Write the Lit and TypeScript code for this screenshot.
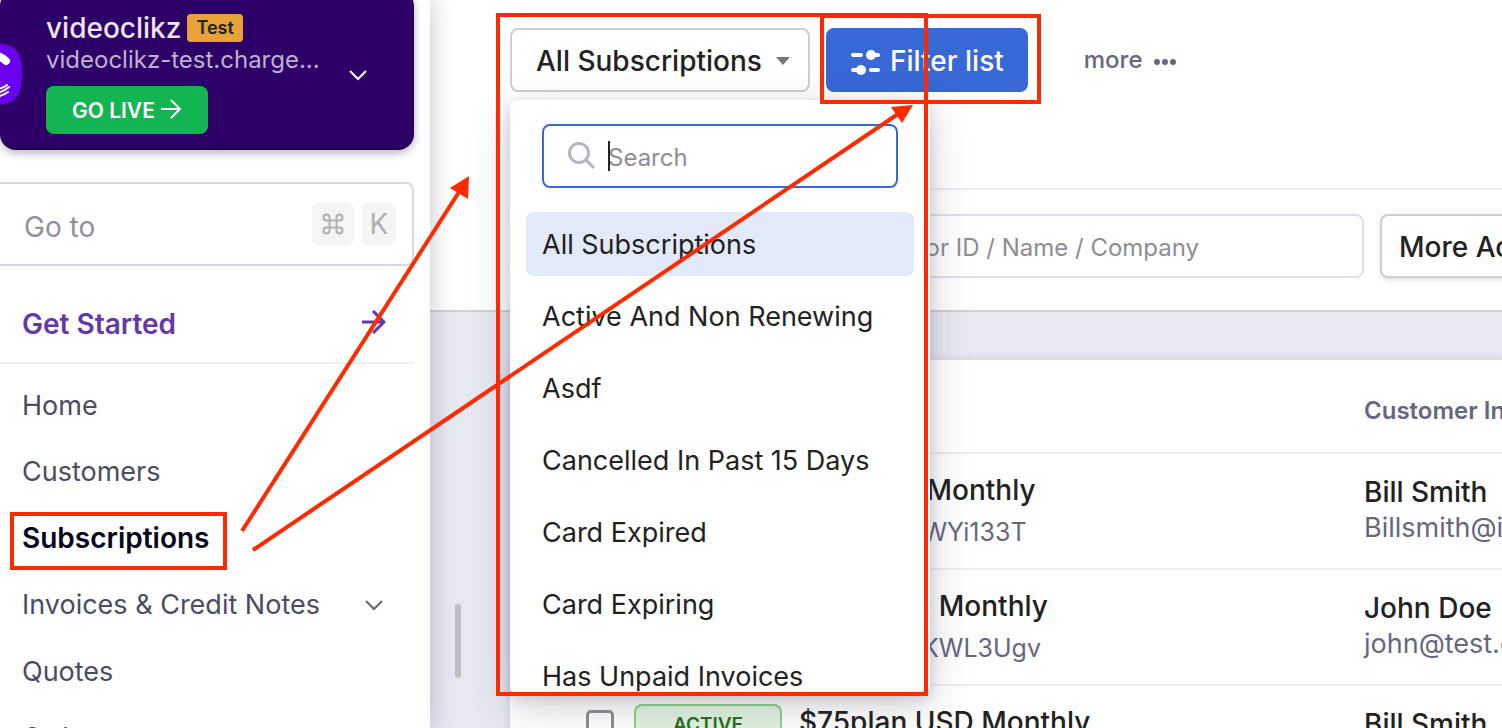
import { LitElement, html, css, svg } from "lit";
import { customElement, state } from "lit/decorators.js";
import { classMap } from "lit/directives/class-map.js";

const views = [
  "All Subscriptions",
  "Active And Non Renewing",
  "Asdf",
  "Cancelled In Past 15 Days",
  "Card Expired",
  "Card Expiring",
  "Has Unpaid Invoices",
];

const rows = [
  { plan: "$50 USD Monthly", id: "AzZhkCTkWYi133T", name: "Bill Smith", email: "Billsmith@imail.com" },
  { plan: "$100 USD Monthly", id: "16BhmTTkKWL3Ugv", name: "John Doe", email: "john@test.com" },
  { plan: "$75plan USD Monthly", id: "169ljTTkJWw2Ugr", name: "Bill Smith", email: "Billsmith@imail.com" },
];

const nav = [
  { label: "Home" },
  { label: "Customers" },
  { label: "Subscriptions", active: true },
  { label: "Invoices & Credit Notes", group: true },
  { label: "Quotes" },
  { label: "Orders" },
];

const chevron = html`<svg class="chevron" viewBox="0 0 20 12" width="20" height="12" aria-hidden="true">
  <path d="M2 2 L10 10 L18 2" fill="none" stroke="currentColor" stroke-width="2" />
</svg>`;

@customElement("side-nav")
class SideNav extends LitElement {
  static styles = css`
    :host {
      display: block;
      box-sizing: border-box;
      width: 430px;
      flex: none;
      padding-right: 16px;
      background: #fff;
      color: #4b4b63;
      font-size: 28px;
      line-height: 36px;
      box-shadow: 0 0 24px rgba(40, 40, 90, 0.28);
      z-index: 1;
    }
    * { box-sizing: border-box; }
    .site {
      display: flex;
      height: 160px;
      margin-top: -10px;
      padding: 22px 46px 16px 0;
      gap: 24px;
      background: #2d0068;
      border-bottom: 2px solid #1e0048;
      border-radius: 16px;
      box-shadow: 0 3px 8px rgba(20, 0, 50, 0.3);
      color: #efe6f6;
    }
    .logo { flex: none; margin-left: -40px; margin-top: 31px; }
    .info { flex: 1; min-width: 0; }
    .title { display: flex; align-items: center; gap: 6px; height: 32px; font-weight: 500; }
    .tag {
      padding: 0 9px;
      border-radius: 4px;
      background: #e8a238;
      color: #222;
      font-size: 18px;
      line-height: 28px;
      font-weight: 600;
    }
    .domain {
      color: #bfb0d3;
      font-size: 24px;
      line-height: 32px;
      white-space: nowrap;
    }
    .live {
      display: flex;
      align-items: center;
      gap: 6px;
      height: 48px;
      margin-top: 10px;
      padding: 2px 26px 0;
      border: 0;
      border-radius: 8px;
      background: #12b552;
      color: #fff;
      font: 600 21px/24px Inter, sans-serif;
      white-space: nowrap;
    }
    .live svg { margin-bottom: 4px; }
    .toggle { align-self: center; padding: 0; border: 0; background: none; color: #fff; line-height: 0; margin-top: 6px; }
    .goto {
      display: flex;
      align-items: center;
      gap: 8px;
      height: 84px;
      margin-top: 32px;
      padding: 0 16px 0 24px;
      border: 2px solid #d9d9e1;
      border-left: 0;
      border-radius: 0 8px 8px 0;
    }
    .goto input {
      flex: 1;
      min-width: 0;
      padding: 6px 0 0;
      border: 0;
      outline: 0;
      background: none;
      font: 400 28px/36px Inter, sans-serif;
    }
    .goto input::placeholder { color: #9090a0; opacity: 1; }
    kbd {
      display: flex;
      align-items: center;
      justify-content: center;
      width: 34px;
      height: 44px;
      border-radius: 8px;
      background: #f5f5f8;
      color: #b0b0b0;
      font: 400 28px/36px Inter, sans-serif;
    }
    kbd.cmd { width: 42px; }
    a { color: inherit; text-decoration: none; }
    .start {
      display: flex;
      align-items: center;
      justify-content: space-between;
      height: 98px;
      padding: 20px 28px 0 22px;
      border-bottom: 2px solid #efeff1;
      color: #6338a8;
      font-weight: 600;
    }
    .start svg { margin-bottom: 4px; }
    ul { margin: 8px 0 0; padding: 0; list-style: none; }
    .link {
      display: flex;
      align-items: center;
      justify-content: space-between;
      height: 66px;
      padding: 2px 30px 0 22px;
      font-size: 27px;
    }
    .active { color: #05051f; font-size: 28px; font-weight: 600; }
    .group { height: 68px; }
    .link .chevron { color: #666; }
  `;

  render() {
    return html`
      <div class="site">
        <svg class="logo" width="62" height="62" viewBox="0 0 62 62" aria-hidden="true">
          <path d="M31 0 C55 0 62 7 62 31 C62 55 55 62 31 62 C7 62 0 55 0 31 C0 7 7 0 31 0Z" fill="#6a00f0" />
          <path d="M34 12 Q41 13 46 18" fill="none" stroke="#fff" stroke-width="8" stroke-linecap="round" />
          <path d="M36 46 Q42 46 47 42 M37 50 Q43 49 49 44 M37 54 Q44 52 48 49" fill="none" stroke="#fff" stroke-width="2" stroke-linecap="round" />
        </svg>
        <div class="info">
          <div class="title"><span>videoclikz</span><span class="tag">Test</span></div>
          <div class="domain">videoclikz-test.charge...</div>
          <button class="live">
            GO LIVE
            <svg width="21" height="20" viewBox="0 0 21 20" aria-hidden="true">
              <path d="M0 10 H19 M10 1 L19 10 L10 19" fill="none" stroke="currentColor" stroke-width="2" />
            </svg>
          </button>
        </div>
        <button class="toggle" aria-label="Switch site">${chevron}</button>
      </div>
      <div class="goto">
        <input type="text" placeholder="Go to" aria-label="Go to" />
        <kbd class="cmd">
          <svg width="22" height="22" viewBox="0 0 22 22" aria-hidden="true">
            <path d="M7.500 7.500 H14.500 V14.500 H7.500 Z M7.500 7.500 H4.500 A3 3 0 1 1 7.500 4.500 Z M14.500 7.500 V4.500 A3 3 0 1 1 17.500 7.500 Z M14.500 14.500 H17.500 A3 3 0 1 1 14.500 17.500 Z M7.500 14.500 V17.500 A3 3 0 1 1 4.500 14.500 Z" fill="none" stroke="currentColor" stroke-width="2" />
          </svg>
        </kbd>
        <kbd>K</kbd>
      </div>
      <a class="start" href="#start">
        Get Started
        <svg width="24" height="24" viewBox="0 0 24 24" aria-hidden="true">
          <path d="M0 12 H22 M11 1 L22 12 L11 23" fill="none" stroke="currentColor" stroke-width="3" />
        </svg>
      </a>
      <nav>
        <ul>
          ${nav.map(
            (n) => html`<li>
              <a class=${classMap({ link: true, active: !!n.active, group: !!n.group })} href="#">
                <span>${n.label}</span>${n.group ? chevron : ""}
              </a>
            </li>`
          )}
        </ul>
      </nav>
    `;
  }
}

@customElement("view-menu")
class ViewMenu extends LitElement {
  @state() private selected = 0;

  static styles = css`
    :host {
      display: block;
      box-sizing: border-box;
      height: 594px;
      overflow: hidden;
      padding: 24px 16px 0;
      border-radius: 8px;
      background: #fff;
      box-shadow: 0 4px 12px rgba(40, 40, 70, 0.16), 0 12px 40px rgba(40, 40, 70, 0.22);
    }
    * { box-sizing: border-box; }
    .search {
      display: flex;
      align-items: center;
      gap: 12px;
      height: 64px;
      margin: 0 16px 24px;
      padding: 0 24px;
      border: 2px solid #3768d6;
      border-radius: 8px;
    }
    .field { position: relative; display: flex; flex: 1; min-width: 0; align-items: center; }
    .caret { position: absolute; left: 0; width: 2px; height: 30px; background: #222; }
    .input {
      flex: 1;
      min-width: 0;
      padding: 4px 0 0;
      border: 0;
      outline: 0;
      background: none;
      font: 400 24px/32px Inter, sans-serif;
    }
    .input::placeholder { color: #8d8d92; opacity: 1; }
    ul { margin: 0; padding: 0; list-style: none; display: grid; gap: 8px; }
    .item {
      display: block;
      width: 100%;
      height: 64px;
      padding: 2px 16px 0;
      border: 0;
      border-radius: 8px;
      background: none;
      color: #222;
      font: 400 27px/36px Inter, sans-serif;
      text-align: left;
      white-space: nowrap;
    }
    .selected { background: #e2e9f9; }
  `;

  render() {
    return html`
      <div class="search">
        <svg width="28" height="28" viewBox="0 0 28 28" aria-hidden="true">
          <circle cx="11" cy="11" r="9.500" fill="none" stroke="#b4b4c2" stroke-width="3" />
          <path d="M18 18 L26 26" stroke="#b4b4c2" stroke-width="3" />
        </svg>
        <div class="field">
          <input class="input" type="text" placeholder="Search" aria-label="Search views" />
          <span class="caret"></span>
        </div>
      </div>
      <ul>
        ${views.map(
          (v, i) => html`<li>
            <button class=${classMap({ item: true, selected: i === this.selected })} @click=${() => (this.selected = i)}>${v}</button>
          </li>`
        )}
      </ul>
    `;
  }
}

@customElement("subscription-table")
class SubscriptionTable extends LitElement {
  static styles = css`
    :host { display: block; background: #fff; box-shadow: 0 0 8px rgba(60, 60, 120, 0.14); }
    * { box-sizing: border-box; }
    table { width: 100%; border-collapse: separate; border-spacing: 0; table-layout: fixed; white-space: nowrap; }
    .pick { width: 124px; }
    .status { width: 165px; }
    .customer { width: 138px; }
    th {
      height: 94px;
      padding: 8px 0 0;
      border-bottom: 2px solid #efeff1;
      color: #666680;
      font-size: 24px;
      font-weight: 600;
      text-align: left;
    }
    td { height: 116px; padding: 18px 0 0; border-bottom: 2px solid #efeff1; vertical-align: top; color: #222; font-size: 27px; line-height: 36px; }
    .check { appearance: none; display: block; width: 28px; height: 28px; margin: 6px 0 0 76px; border: 3px solid #8f8f96; border-radius: 5px; background: #fff; }
    .badge {
      display: block;
      width: 148px;
      height: 40px;
      border: 2px solid #8fd08a;
      border-radius: 8px;
      background: #e2f3e1;
      color: #2a7020;
      font-size: 19px;
      line-height: 38px;
      font-weight: 600;
      text-align: center;
    }
    .plan { font-size: 28px; font-weight: 500; }
    .id { margin-top: 6px; color: #666680; font-size: 25px; line-height: 36px; }
    .who { margin-top: 2px; font-size: 28px; font-weight: 500; }
    .mail { color: #666680; }
  `;

  render() {
    return html`
      <table>
        <thead>
          <tr>
            <th class="pick"></th>
            <th class="status"></th>
            <th></th>
            <th class="customer">Customer Info</th>
          </tr>
        </thead>
        <tbody>
          ${rows.map(
            (r) => html`<tr>
              <td><input class="check" type="checkbox" aria-label="Select ${r.plan}" /></td>
              <td><span class="badge">ACTIVE</span></td>
              <td>
                <div class="plan">${r.plan}</div>
                <div class="id">${r.id}</div>
              </td>
              <td>
                <div class="who">${r.name}</div>
                <div class="mail">${r.email}</div>
              </td>
            </tr>`
          )}
        </tbody>
      </table>
    `;
  }
}

const arrow = (x1: number, y1: number, x2: number, y2: number, head: string) => svg`
  <line x1=${x1} y1=${y1} x2=${x2} y2=${y2} stroke="#ff2a00" stroke-width="4" />
  <path d=${head} fill="#ff2a00" />`;

@customElement("app-root")
class AppRoot extends LitElement {
  static styles = css`
    :host {
      position: relative;
      display: block;
      height: 100vh;
      overflow: hidden;
      background: #e8e8f2;
      font-family: Inter, sans-serif;
    }
    * { box-sizing: border-box; }
    .shell { display: flex; height: 100%; }
    main { position: relative; flex: 1; min-width: 0; }
    header { padding: 28px 0 32px 80px; background: #fff; border-bottom: 2px solid #d2d2d4; }
    .toolbar { display: flex; align-items: center; gap: 16px; padding-bottom: 96px; border-bottom: 2px solid #efeff6; }
    .picker { position: relative; }
    .current, .filter, .more, .actions {
      display: flex;
      align-items: center;
      height: 64px;
      border-radius: 8px;
      font: 500 28px/36px Inter, sans-serif;
      white-space: nowrap;
    }
    .current { width: 300px; justify-content: space-between; padding: 2px 18px 0 24px; border: 2px solid #cdcdd3; background: #fff; color: #222; }
    .menu { position: absolute; top: 72px; left: 0; width: 420px; z-index: 2; }
    .filter { gap: 8px; padding: 2px 24px 0; border: 0; background: #3768d6; color: #fff; }
    .more { gap: 12px; margin-left: 40px; padding: 0; border: 0; background: none; color: #666680; font-size: 24px; }
    .more svg { margin-top: 4px; }
    .tools { display: flex; gap: 16px; margin-top: 24px; }
    .lookup {
      flex: 1;
      min-width: 0;
      height: 64px;
      padding: 2px 24px 0 319px;
      border: 2px solid #e0e0ec;
      border-radius: 8px;
      background: #fff;
      font: 400 24px/32px Inter, sans-serif;
    }
    .lookup::placeholder { color: #8d8d92; opacity: 1; }
    .last { width: 122px; }
    .actions { padding: 2px 17px 0; border: 2px solid #cdcdd3; background: #fff; color: #222; box-shadow: 0 2px 4px rgba(0, 0, 0, 0.12); }
    .table { display: block; margin: 48px 0 0 80px; }
    .scroll { position: absolute; left: 25px; top: 604px; width: 6px; height: 74px; border-radius: 3px; background: #c0c0c0; }
    .notes { position: absolute; left: 0; top: 0; z-index: 3; pointer-events: none; }
  `;

  render() {
    return html`
      <div class="shell">
        <side-nav></side-nav>
        <main>
          <header>
            <div class="toolbar">
              <div class="picker">
                <button class="current" aria-expanded="true">
                  All Subscriptions
                  <svg width="14" height="8" viewBox="0 0 14 8" aria-hidden="true"><path d="M0 0 H14 L7 8 Z" fill="#777" /></svg>
                </button>
                <view-menu class="menu"></view-menu>
              </div>
              <button class="filter">
                <svg width="32" height="32" viewBox="0 0 32 32" aria-hidden="true">
                  <path d="M3 10 H11 M21 10 H28 M3 25 H11 M21 25 H28" stroke="#fff" stroke-width="4" stroke-linecap="round" />
                  <circle cx="21" cy="10" r="5" fill="#fff" />
                  <circle cx="11" cy="25" r="5" fill="#fff" />
                </svg>
                Filter list
              </button>
              <button class="more">
                more
                <svg width="22" height="6" viewBox="0 0 22 6" aria-hidden="true">
                  <circle cx="3" cy="3" r="3" fill="currentColor" />
                  <circle cx="11" cy="3" r="3" fill="currentColor" />
                  <circle cx="19" cy="3" r="3" fill="currentColor" />
                </svg>
              </button>
            </div>
            <div class="tools">
              <input class="lookup" type="text" placeholder="Search for ID / Name / Company" aria-label="Search subscriptions" />
              <div class="last"><button class="actions">More Actions</button></div>
            </div>
          </header>
          <subscription-table class="table"></subscription-table>
          <div class="scroll"></div>
        </main>
      </div>
      <svg class="notes" width="1502" height="728" viewBox="0 0 1502 728" aria-hidden="true">
        <g fill="none" stroke="#ff2a00" stroke-width="4">
          <rect x="12" y="514" width="213" height="54" />
          <rect x="498" y="15" width="428" height="679" />
          <rect x="822" y="16" width="217" height="86" />
        </g>
        ${arrow(242, 531, 459, 192, "M469 176 L468 199 L450 188 Z")}
        ${arrow(253, 550, 898, 114, "M913 105 L902 123 L891 107 Z")}
      </svg>
    `;
  }
}
